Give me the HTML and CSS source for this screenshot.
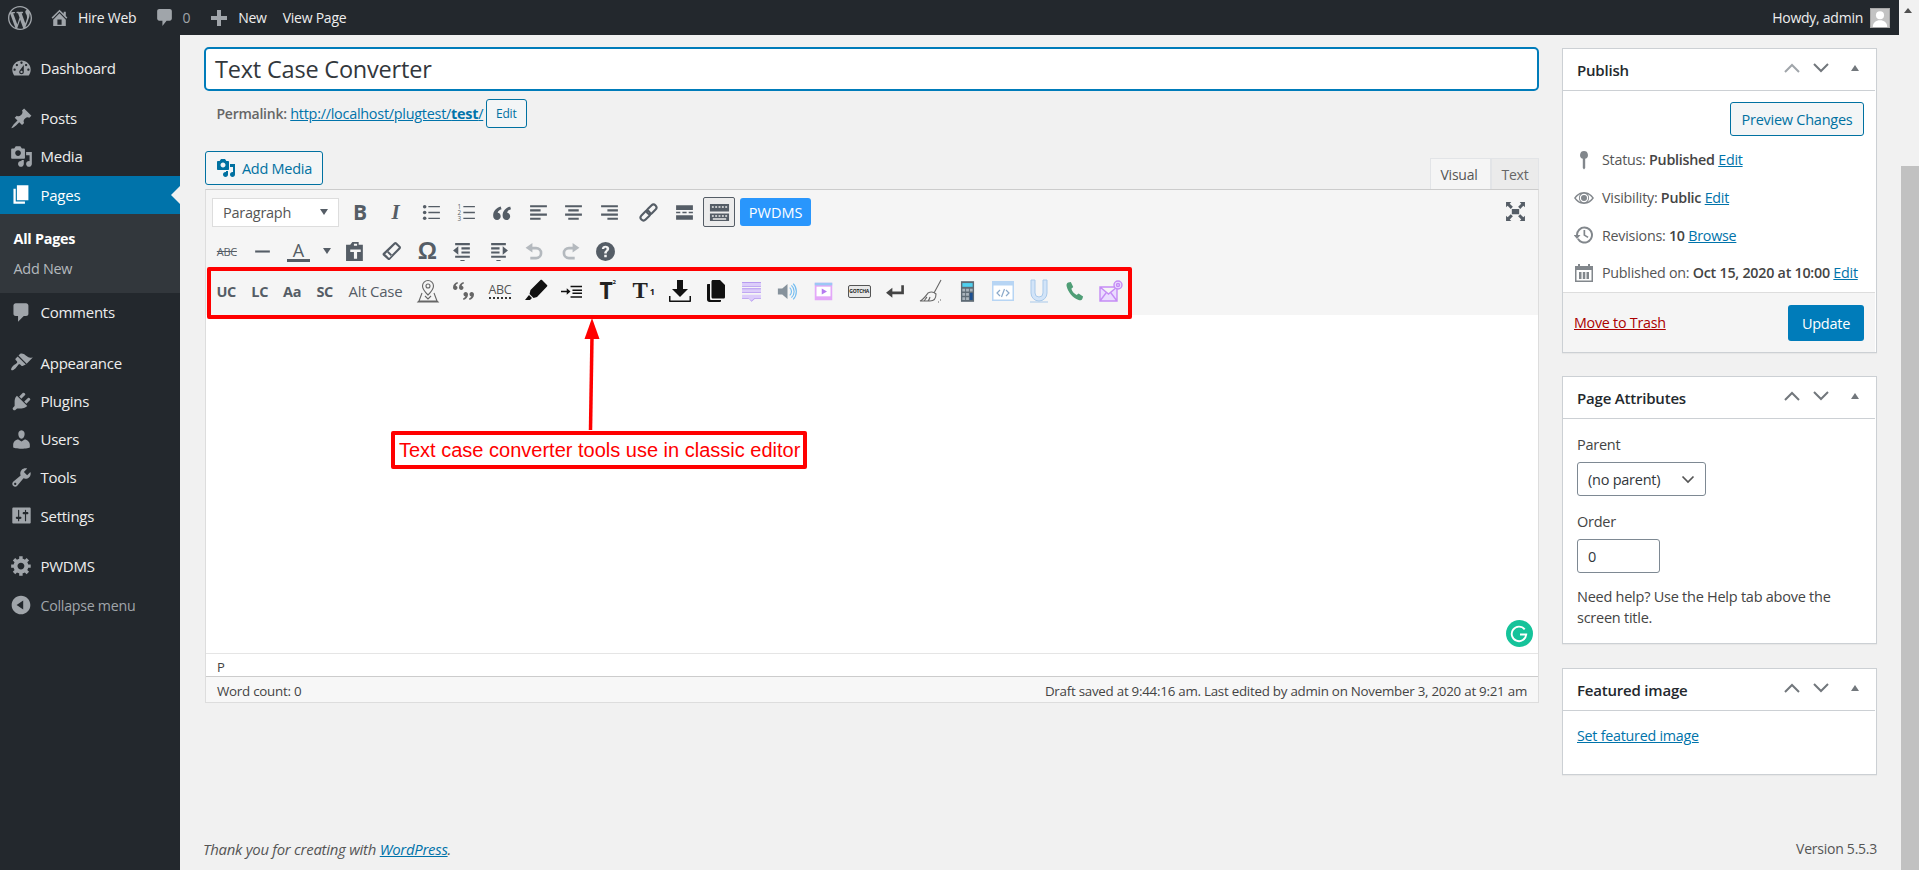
FILE: index.html
```html
<!DOCTYPE html>
<html lang="en">
<head>
<meta charset="utf-8">
<title>Edit Page</title>
<link rel="stylesheet" href="styles.css">
</head>
<body>
<div class="page">
<div class="viewport">
  <header class="adminbar">
    <svg class="ab-logo" viewBox="0 0 20 20"><path d="M20 10c0-5.51-4.49-10-10-10C4.48 0 0 4.49 0 10c0 5.52 4.48 10 10 10 5.51 0 10-4.48 10-10zM7.78 15.37L4.37 6.22c.55-.02 1.17-.08 1.17-.08.5-.06.44-1.13-.06-1.11 0 0-1.45.11-2.37.11-.18 0-.37 0-.58-.01C4.12 2.69 6.87 1.11 10 1.11c2.33 0 4.45.87 6.05 2.34-.68-.11-1.65.39-1.65 1.58 0 .74.45 1.36.9 2.1.35.61.55 1.36.55 2.46 0 1.49-1.4 5-1.4 5l-3.03-8.37c.54-.02.82-.17.82-.17.5-.05.44-1.25-.06-1.22 0 0-1.44.12-2.38.12-.87 0-2.33-.12-2.33-.12-.5-.03-.56 1.2-.06 1.22l.92.08 1.26 3.41zM17.41 10c.24-.64.74-1.87.43-4.25.7 1.29 1.05 2.71 1.05 4.25 0 3.29-1.73 6.24-4.4 7.78.97-2.59 1.94-5.2 2.92-7.78zM6.1 18.09C3.12 16.65 1.11 13.53 1.11 10c0-1.3.23-2.48.72-3.59C3.25 10.3 4.67 14.2 6.1 18.09zm4.03-6.63l2.58 6.98c-.86.29-1.76.45-2.71.45-.79 0-1.57-.11-2.29-.33.81-2.38 1.62-4.74 2.42-7.1z"/></svg>
    <svg class="ab-icon ab-home" viewBox="0 0 20 20"><path d="M16 8.5l1.53 1.53-1.06 1.06L10 4.62l-6.47 6.47-1.06-1.06L10 2.5l4 4v-2h2v4zm-6-2.46l6 5.99V18H4v-5.97zM12 17v-5H8v5h4z"/></svg>
    <span class="ab-text ab-site">Hire Web</span>
    <svg class="ab-icon ab-comment" viewBox="0 0 20 20"><path d="M5 2h10c1.100 0 2 .9 2 2v7c0 1.100-.9 2-2 2h-3l-4 5v-5H5c-1.100 0-2-.9-2-2V4c0-1.100.9-2 2-2z"/></svg>
    <span class="ab-count">0</span>
    <svg class="ab-icon ab-plus" viewBox="0 0 20 20"><path d="M8 2h4v6h6v4h-6v6H8v-6H2V8h6z"/></svg>
    <span class="ab-text ab-new">New</span>
    <span class="ab-text ab-view">View Page</span>
    <span class="ab-text ab-howdy">Howdy, admin</span>
    <span class="ab-avatar"><svg viewBox="0 0 20 20"><circle cx="10" cy="7" r="4.500"/><path d="M2 20c0-5 3.500-7.500 8-7.500s8 2.500 8 7.500z"/></svg></span>
  </header>

  <div class="workspace">
    <nav class="sidebar">
      <ul class="menu">
        <li class="item first"><svg class="mi" viewBox="0 0 20 20"><path fill-rule="evenodd" d="M3.760 16h12.480c1.100-1.370 1.760-3.110 1.760-5 0-4.420-3.580-8-8-8s-8 3.580-8 8c0 1.890.660 3.630 1.760 5zM10 4c.55 0 1 .45 1 1s-.45 1-1 1-1-.45-1-1 .45-1 1-1zM6 6c.55 0 1 .45 1 1s-.45 1-1 1-1-.45-1-1 .45-1 1-1zm8 0c.55 0 1 .45 1 1s-.45 1-1 1-1-.45-1-1 .45-1 1-1zm-5.370 5.550L12 7v6c0 1.100-.9 2-2 2s-2-.9-2-2c0-.57.24-1.080.63-1.450zM4 10c.55 0 1 .45 1 1s-.45 1-1 1-1-.45-1-1 .45-1 1-1zm12 0c.55 0 1 .45 1 1s-.45 1-1 1-1-.45-1-1 .45-1 1-1zm-5 3c0-.55-.45-1-1-1s-1 .45-1 1 .45 1 1 1 1-.45 1-1z"/></svg>Dashboard</li>
        <li class="item sep"><svg class="mi" viewBox="0 0 20 20"><path d="M10.440 3.020l1.820-1.820 6.360 6.350-1.830 1.820c-1.050-.68-2.480-.57-3.410.36l-.75.75c-.92.93-1.040 2.350-.35 3.410l-1.830 1.820-2.410-2.410-2.800 2.790c-.42.42-3.380 2.710-3.800 2.290s1.860-3.390 2.280-3.810l2.790-2.790L4.100 9.360l1.830-1.820c1.050.69 2.480.57 3.400-.36l.75-.75c.93-.92 1.050-2.350.36-3.410z"/></svg>Posts</li>
        <li class="item"><svg class="mi" viewBox="0 0 20 20"><path fill-rule="evenodd" d="M13 11V4c0-.55-.45-1-1-1h-1.670L9 1H5L3.670 3H2c-.55 0-1 .45-1 1v7c0 .55.45 1 1 1h10c.55 0 1-.45 1-1zM7 4.500c1.380 0 2.500 1.120 2.500 2.500S8.380 9.500 7 9.500 4.500 8.380 4.500 7 5.620 4.500 7 4.500zM14 6h5v10.500c0 1.380-1.120 2.500-2.500 2.500S14 17.880 14 16.500s1.120-2.500 2.500-2.500c.17 0 .34.02.5.05V9h-3V6zm-4 8.050V13h2v3.500c0 1.380-1.120 2.500-2.500 2.500S7 17.880 7 16.500 8.120 14 9.500 14c.17 0 .34.02.5.05z"/></svg>Media</li>
        <li class="item active"><svg class="mi" viewBox="0 0 20 20"><path d="M6 15V2h10v13H6zm-1 1h8v2H3V5h2v11z"/></svg>Pages</li>
        <li class="submenu">
          <span class="sub current">All Pages</span>
          <span class="sub">Add New</span>
        </li>
        <li class="item"><svg class="mi" viewBox="0 0 20 20"><path d="M5 2h9c1.100 0 2 .9 2 2v7c0 1.100-.9 2-2 2h-2l-5 5v-5H5c-1.100 0-2-.9-2-2V4c0-1.100.9-2 2-2z"/></svg>Comments</li>
        <li class="item sep sep-wide"><svg class="mi" viewBox="0 0 20 20"><path d="M14.480 11.060L7.410 3.990l1.500-1.500c.5-.56 2.300-.47 3.510.32 1.210.8 1.430 1.280 2.910 2.100 1.180.64 2.450 1.260 4.450.85zm-.71.71L6.700 4.700 4.930 6.470c-.39.39-.39 1.020 0 1.410l1.060 1.060c.39.39.39 1.030 0 1.420-.6.6-1.430 1.110-2.210 1.690-.35.26-.7.53-1.010.84-1.430 1.430-2.220 3.100-1.600 3.720.62.62 2.290-.17 3.720-1.600.31-.31.58-.66.84-1.010.58-.78 1.090-1.610 1.690-2.210.39-.39 1.030-.39 1.420 0l1.060 1.060c.39.39 1.020.39 1.410 0z"/></svg>Appearance</li>
        <li class="item"><svg class="mi" viewBox="0 0 20 20"><path d="M13.110 4.360L9.870 7.600 8 5.730l3.240-3.240c.35-.34 1.050-.2 1.560.32.52.51.66 1.210.31 1.550zm-8 1.770l.91-1.120 9.010 9.010-1.190.84c-.71.71-2.630 1.160-3.820 1.160H6.140L4.900 17.260c-.59.59-1.540.59-2.120 0-.59-.58-.59-1.530 0-2.120l1.240-1.240v-3.880c0-1.130.4-3.190 1.090-3.890zm7.260 3.970l3.240-3.240c.34-.35 1.040-.21 1.550.31.52.51.66 1.210.31 1.550l-3.240 3.250z"/></svg>Plugins</li>
        <li class="item"><svg class="mi" viewBox="0 0 20 20"><path d="M10 9.250c-2.270 0-2.730-3.440-2.730-3.440C7 4.020 7.820 2 9.970 2c2.160 0 2.980 2.020 2.710 3.810 0 0-.41 3.440-2.680 3.440zm0 2.570L12.720 10c2.390 0 4.520 2.330 4.520 4.530v2.490s-3.650 1.130-7.240 1.130c-3.650 0-7.240-1.130-7.240-1.130v-2.490c0-2.250 1.940-4.480 4.470-4.480z"/></svg>Users</li>
        <li class="item"><svg class="mi" viewBox="0 0 20 20"><path fill-rule="evenodd" d="M16.680 9.770c-1.340 1.340-3.300 1.670-4.950.99l-5.410 6.520c-.99.99-2.590.99-3.580 0s-.99-2.590 0-3.570l6.520-5.420c-.68-1.650-.35-3.610.99-4.950 1.280-1.280 3.120-1.620 4.720-1.060l-2.890 2.890 2.820 2.820 2.860-2.870c.53 1.580.18 3.390-1.080 4.650zM3.810 16.210c.4.39 1.040.39 1.430 0 .4-.4.4-1.040 0-1.430-.39-.4-1.030-.4-1.430 0-.39.39-.39 1.030 0 1.430z"/></svg>Tools</li>
        <li class="item"><svg class="mi" viewBox="0 0 20 20"><path fill-rule="evenodd" d="M18 16V4c0-.55-.45-1-1-1H3c-.55 0-1 .45-1 1v12c0 .55.45 1 1 1h14c.55 0 1-.45 1-1zM8 11h1c.55 0 1 .45 1 1s-.45 1-1 1H8v1.500c0 .28-.22.5-.5.5s-.5-.22-.5-.5V13H6c-.55 0-1-.45-1-1s.45-1 1-1h1V5.500c0-.28.22-.5.5-.5s.5.22.5.5V11zm5-2h-1c-.55 0-1-.45-1-1s.45-1 1-1h1V5.500c0-.28.22-.5.5-.5s.5.22.5.5V7h1c.55 0 1 .45 1 1s-.45 1-1 1h-1v5.500c0 .28-.22.5-.5.5s-.5-.22-.5-.5V9z"/></svg>Settings</li>
        <li class="item sep"><svg class="mi" viewBox="0 0 20 20"><path fill-rule="evenodd" d="M18 12h-2.180c-.17.7-.44 1.350-.81 1.930l1.540 1.540-2.100 2.100-1.540-1.540c-.58.36-1.230.63-1.910.79V19H8v-2.180c-.68-.16-1.330-.43-1.910-.79l-1.540 1.540-2.120-2.120 1.540-1.540c-.36-.58-.63-1.230-.79-1.910H1V9.030h2.170c.16-.7.44-1.350.8-1.940L2.430 5.550l2.100-2.100 1.540 1.540c.58-.37 1.240-.64 1.930-.81V2h3v2.180c.68.16 1.330.43 1.910.79l1.540-1.540 2.120 2.120-1.540 1.540c.36.59.64 1.240.8 1.940H18V12zm-8.500 1.500c1.660 0 3-1.340 3-3s-1.340-3-3-3-3 1.340-3 3 1.340 3 3 3z"/></svg>PWDMS</li>
        <li class="item collapse"><svg class="mi" viewBox="0 0 20 20"><path fill-rule="evenodd" d="M10 1.500c4.700 0 8.500 3.800 8.500 8.500s-3.800 8.500-8.500 8.500-8.500-3.800-8.500-8.500 3.800-8.500 8.500-8.500zM12 6l-6 4 6 4z"/></svg>Collapse menu</li>
      </ul>
    </nav>

    <main class="content">
      <div class="columns">
        <section class="primary">
          <div class="title-input">Text Case Converter</div>
          <div class="permalink">
            <b class="perm-label">Permalink:</b>
            <a class="link perm-url">http://localhost/plugtest/<b>test</b>/</a>
            <span class="btn perm-edit">Edit</span>
          </div>
          <div class="media-row">
            <span class="btn add-media"><svg class="am-icon" viewBox="0 0 20 20"><path fill-rule="evenodd" d="M13 11V4c0-.55-.45-1-1-1h-1.670L9 1H5L3.670 3H2c-.55 0-1 .45-1 1v7c0 .55.45 1 1 1h10c.55 0 1-.45 1-1zM7 4.500c1.380 0 2.500 1.120 2.500 2.500S8.380 9.500 7 9.500 4.500 8.380 4.500 7 5.620 4.500 7 4.500zM14 6h5v10.500c0 1.380-1.120 2.500-2.500 2.500S14 17.880 14 16.500s1.120-2.500 2.500-2.500c.17 0 .34.02.5.05V9h-3V6zm-4 8.050V13h2v3.500c0 1.380-1.120 2.500-2.500 2.500S7 17.880 7 16.500 8.120 14 9.500 14c.17 0 .34.02.5.05z"/></svg>Add Media</span>
            <div class="tabs"><span class="tab on">Visual</span><span class="tab">Text</span></div>
          </div>

          <div class="editor">
            <div class="toolbar">
              <div class="row row1">
                <span class="format">Paragraph<i class="caret"></i></span>
                <span class="tb tb-after"><b class="g-b">B</b></span>
                <span class="tb"><i class="g-i">I</i></span>
                <span class="tb"><svg class="ti" viewBox="0 0 20 20"><circle cx="3.500" cy="4.500" r="1.700"/><circle cx="3.500" cy="10" r="1.700"/><circle cx="3.500" cy="15.500" r="1.700"/><path d="M7 3.800h11v1.300H7zM7 9.400h11v1.300H7zM7 14.900h11v1.300H7z"/></svg></span>
                <span class="tb"><svg class="ti" viewBox="0 0 20 20"><text class="ti-num" x="1.500" y="6.500">1</text><text class="ti-num" x="1.500" y="12.500">2</text><text class="ti-num" x="1.500" y="18.500">3</text><path d="M7 3.800h11v1.300H7zM7 9.400h11v1.300H7zM7 14.900h11v1.300H7z"/></svg></span>
                <span class="tb"><svg class="ti" viewBox="0 0 20 20"><path transform="translate(-0.500 -0.500) scale(1.600)" d="M5.500 3C3 3.800 1 5.500 1 8.500c0 1.500 1 2.500 2.300 2.500s2.200-1 2.200-2.200c0-1.200-.8-2-1.800-2.100C3.900 5.700 4.700 5 6 4.600z"/><path transform="translate(8.500 -0.500) scale(1.600)" d="M5.500 3C3 3.800 1 5.500 1 8.500c0 1.500 1 2.500 2.300 2.500s2.200-1 2.200-2.200c0-1.200-.8-2-1.800-2.100C3.900 5.700 4.700 5 6 4.600z"/></svg></span>
                <span class="tb"><svg class="ti" viewBox="0 0 20 20"><path d="M2 3h16v2H2zM2 7h10v2H2zM2 11h16v2H2zM2 15h10v2H2z"/></svg></span>
                <span class="tb"><svg class="ti" viewBox="0 0 20 20"><path d="M2 3h16v2H2zM5 7h10v2H5zM2 11h16v2H2zM5 15h10v2H5z"/></svg></span>
                <span class="tb"><svg class="ti" viewBox="0 0 20 20"><path d="M2 3h16v2H2zM8 7h10v2H8zM2 11h16v2H2zM8 15h10v2H8z"/></svg></span>
                <span class="tb tb-link"><svg class="ti ti-stroke" viewBox="0 0 20 20"><g transform="rotate(-45 10 10)"><rect x="0.500" y="7.200" width="10.500" height="5.600" rx="2.800"/><rect x="9" y="7.200" width="10.500" height="5.600" rx="2.800"/></g></svg></span>
                <span class="tb"><svg class="ti" viewBox="0 0 20 20"><path d="M2 3h16v4.500H2zM2 9.300h4v1.400H2zM8 9.300h4v1.400H8zM14 9.300h4v1.400h-4zM2 12.500h16V17H2z"/></svg></span>
                <span class="kbd"><svg class="ti" viewBox="0 0 22 22"><path fill-rule="evenodd" d="M1 2h20v8H1zM3 4.500v1.500h2V4.500zm3.500 0v1.500h2V4.500zm3.500 0v1.500h2V4.500zm3.500 0v1.500h2V4.500zm3.500 0v1.500h2V4.500zM1 12h20v8H1zM3 14v1.500h2V14zm3.500 0v1.500h2V14zm3.500 0v1.500h2V14zm3.500 0v1.500h2V14zm3.500 0v1.500h2V14zM4 17v1.500h14V17z"/></svg></span>
                <span class="pwdms">PWDMS</span>
                <span class="tb tb-full"><svg class="ti" viewBox="0 0 20 20"><path d="M6.500 7.500h7v5h-7zM1 1h5L4.500 2.500 7.500 5.500 5.500 7.500 2.500 4.500 1 6zM19 1v5l-1.500-1.500-3 3-2-2 3-3L14 1zM1 19v-5l1.500 1.500 3-3 2 2-3 3L6 19zM19 19h-5l1.500-1.500-3-3 2-2 3 3L19 14z"/></svg></span>
              </div>
              <div class="row row2">
                <span class="tb"><span class="g-abc">ABC</span></span>
                <span class="tb"><svg class="ti" viewBox="0 0 20 20"><path d="M3 9h14v2H3z"/></svg></span>
                <span class="tb g-color">A<i class="color-bar"></i></span>
                <span class="tb tb-caret"><i class="caret"></i></span>
                <span class="tb"><svg class="ti" viewBox="0 0 20 20"><path fill-rule="evenodd" d="M7 1h6v2.500h4V19H1V3.500h4zM8.500 2.500v2h3v-2zM5 8v2.500h3.500V17h3v-6.500H15V8z"/></svg></span>
                <span class="tb"><svg class="ti" viewBox="0 0 20 20"><path fill-rule="evenodd" d="M12.500 1.500c.7-.7 1.700-.7 2.400 0l3.600 3.600c.7.7.7 1.700 0 2.400l-9.800 10c-.7.700-1.700.700-2.400 0L2 13.800c-.7-.7-.7-1.700 0-2.400zM4 12.500l3.700 3.700 3-3-3.700-3.700zM13.700 3l-7.900 7.900 3.300 3.300L17 6.300z"/></svg></span>
                <span class="tb g-omega">Ω</span>
                <span class="tb"><svg class="ti" viewBox="0 0 20 20"><path d="M3 2h14v2H3zM9 6h8v2H9zM9 10h8v2H9zM3 14h14v2H3zM8 18h4v1H8zM1 9l5-4v8z"/></svg></span>
                <span class="tb"><svg class="ti" viewBox="0 0 20 20"><path d="M3 2h14v2H3zM3 6h8v2H3zM3 10h8v2H3zM3 14h14v2H3zM8 18h4v1H8zM19 9l-5-4v8z"/></svg></span>
                <span class="tb"><svg class="ti ti-off" viewBox="0 0 20 20"><path d="M8 2v3.500h3.500a6 6 0 0 1 0 12H6v-2.500h5.500a3.500 3.500 0 0 0 0-7H8V11L1.500 6.500z"/></svg></span>
                <span class="tb"><svg class="ti ti-off" viewBox="0 0 20 20"><path d="M12 2v3.500H8.500a6 6 0 0 0 0 12H14v-2.500H8.500a3.500 3.500 0 0 1 0-7H12V11l6.500-4.500z"/></svg></span>
                <span class="tb"><svg class="ti" viewBox="0 0 20 20"><path fill-rule="evenodd" d="M10 1a9 9 0 1 1 0 18 9 9 0 0 1 0-18zM8.800 13v2.400h2.400V13zM10 4.500c-2 0-3.400 1.100-3.500 3.200h2.300c.1-.8.500-1.200 1.100-1.200.6 0 1.100.4 1.100 1 0 1.400-2.200 1.500-2.200 4.300h2.400c0-1.900 2.300-2.100 2.300-4.600 0-1.700-1.500-2.700-3.500-2.700z"/></svg></span>
              </div>
              <div class="row row3">
                <span class="tc uc">UC</span>
                <span class="tc lc">LC</span>
                <span class="tc aa">Aa</span>
                <span class="tc sc">SC</span>
                <span class="tc alt">Alt Case</span>
                <span class="tw"><svg class="ti ti-big ti-line" viewBox="0 0 24 24"><path d="M12 1.500a5.500 5.500 0 0 1 5.500 5.500c0 3-3.500 7-5.500 9-2-2-5.500-6-5.500-9A5.500 5.500 0 0 1 12 1.500z"/><circle cx="12" cy="7" r="2"/><path d="M6 14l-3 8h18l-3-8M3 22l-1 1h20l-1-1M9 17l3 3 3-3"/></svg></span>
                <span class="tw"><svg class="ti ti-big ti-gray" viewBox="0 0 24 24"><path d="M5.500 3C3 3.800 1 5.500 1 8.500c0 1.500 1 2.500 2.300 2.500s2.200-1 2.200-2.200c0-1.200-.8-2-1.800-2.100C3.900 5.700 4.700 5 6 4.600z"/><path transform="translate(6 0)" d="M5.500 3C3 3.800 1 5.500 1 8.500c0 1.500 1 2.500 2.300 2.500s2.200-1 2.200-2.200c0-1.200-.8-2-1.800-2.100C3.900 5.700 4.700 5 6 4.600z"/><path transform="rotate(180 8.500 12)" d="M5.500 3C3 3.800 1 5.500 1 8.500c0 1.500 1 2.500 2.300 2.500s2.200-1 2.200-2.200c0-1.200-.8-2-1.800-2.100C3.900 5.700 4.700 5 6 4.600z"/><path transform="rotate(180 11.500 12)" d="M5.500 3C3 3.800 1 5.500 1 8.500c0 1.500 1 2.500 2.300 2.500s2.200-1 2.200-2.200c0-1.200-.8-2-1.800-2.100C3.900 5.700 4.700 5 6 4.600z"/></svg></span>
                <span class="tw"><span class="g-abc2">ABC</span></span>
                <span class="tw"><svg class="ti ti-big ti-black" viewBox="0 0 24 24"><path d="M18 1l5 5c.5.5.5 1 0 1.500L13 18l-3.500 1-4-4 1-4L16.500 1c.5-.5 1-.5 1.500 0zM5 16l3 3-2 2H1z"/></svg></span>
                <span class="tw"><svg class="ti ti-black" viewBox="0 0 22 20"><path d="M10 4h12v1.500H10zM12 8h10v1.500H12zM12 11h10v1.500H12zM10 15h12v1.500H10zM0 9.200h6V6.500l4 3.500-4 3.500v-2.700H0z"/></svg></span>
                <span class="tw g-sup">T<sup>2</sup></span>
                <span class="tw g-sub">T<sub>1</sub></span>
                <span class="tw"><svg class="ti ti-big ti-black" viewBox="0 0 24 24"><path d="M9 1h6v9h5l-8 8-8-8h5zM1 17h1.500v4.500h19V17H23v5c0 .6-.4 1-1 1H2c-.6 0-1-.4-1-1z"/></svg></span>
                <span class="tw"><svg class="ti ti-big ti-black" viewBox="0 0 24 24"><path d="M10 1h7l5 5v12c0 1-.7 1.500-1.500 1.500H10c-1 0-1.500-.7-1.500-1.500V2.500C8.500 1.700 9 1 10 1zM5 5h2v14.500c0 1 .6 1.500 1.500 1.500H18v1c0 .7-.6 1-1.200 1H6.500C5 23 4 22 4 20.500V6c0-.6.4-1 1-1z"/></svg></span>
                <span class="tw"><svg class="ti" viewBox="0 0 20 20"><path class="c-lilac" d="M1 1h18v4.500H1zM1 7h18v4.500H1zM1 13h18v4h-6l-3 2.500L7 17H1z"/><path class="c-lilac-d" d="M1 1h18v.8H1zM1 4.700h18v.8H1zM1 7h18v.8H1zM1 10.700h18v.8H1zM1 16.200h6l3 2.600 3-2.600h6v.8h-5.700L10 19.800 7.700 17H1z"/></svg></span>
                <span class="tw"><svg class="ti" viewBox="0 0 24 24"><path class="c-slate" d="M1 8.500h5l6-5v17l-6-5H1z"/><path class="c-arc" d="M14.500 7.500a6 6 0 0 1 0 9M16.500 5a9.500 9.500 0 0 1 0 14M18.500 3a13 13 0 0 1 0 18"/></svg></span>
                <span class="tw"><svg class="ti" viewBox="0 0 24 24"><path class="c-pink" d="M2 2h20v20H2z"/><path class="c-inner" d="M4 6.500h16v11H4z"/><path class="c-violet" d="M10 8.500l6 3.500-6 3.500z"/><path class="c-blue" d="M2 2h20v3H2z"/></svg></span>
                <span class="tw"><span class="gotcha">GOTCHA</span></span>
                <span class="tw"><svg class="ti ti-dark" viewBox="0 0 20 20"><path d="M18 4v8.500H7V16L1 11.300 7 6.500V10h8.500V4z"/></svg></span>
                <span class="tw"><svg class="ti ti-big ti-line" viewBox="0 0 24 24"><path d="M22 1l-7 13M9 14c3-1.500 6-1 8 1 0 4-2 7-6 7H1c3-1 5-4 8-8zM5 22c1-1 2-3 3-4M9 22c1-1 1.500-2 2-4M21 21h1M19 23h1"/></svg></span>
                <span class="tw"><svg class="ti ti-calc" viewBox="0 0 16 22"><path class="c-calc" d="M1 0h14v22H1z"/><path class="c-cyan" d="M2.500 2h11v4h-11z"/><path class="c-key" d="M2.500 8h3v3h-3zM6.500 8h3v3h-3zM10.500 8h3v3h-3zM2.500 12.500h3v3h-3zM6.500 12.500h3v3h-3zM2.500 17h3v3h-3zM6.500 17h3v3h-3z"/><path class="c-navy" d="M10.500 12.500h3V20h-3z"/></svg></span>
                <span class="tw"><svg class="ti ti-big" viewBox="0 0 24 24"><path class="c-win" d="M1 2h22v20H1z"/><path class="c-inner" d="M2.500 6.500h19v14h-19z"/><path class="c-code" d="M9 11l-3 3 3 3M15 11l3 3-3 3M13.500 10l-3 8"/></svg></span>
                <span class="tw"><svg class="ti ti-big" viewBox="0 0 24 24"><path class="c-u" d="M4 1h4v13a4 4 0 0 0 8 0V1h4v13a8 8 0 0 1-16 0zM3 23h18"/></svg></span>
                <span class="tw"><svg class="ti ti-phone" viewBox="0 0 20 20"><path d="M4 1.500l2.500-.5 2.300 4.800-1.800 1.600c.8 2.600 2.600 4.700 5 6l1.900-1.600 4.300 2.900-.7 2.300c-.5 1.300-2.100 1.800-3.600 1.200C8 15.700 3.900 10.700 2.500 5c-.4-1.500.2-3 1.500-3.500z"/></svg></span>
                <span class="tw"><svg class="ti ti-big" viewBox="0 0 24 24"><path class="c-mail" d="M1 8h17v14H1zM1 8l8.500 7L18 8M1 22l6-8M18 22l-6-8"/><circle class="c-mail" cx="19" cy="6" r="4"/><circle class="c-mail" cx="19" cy="6" r="1.500"/></svg></span>
              </div>
            </div>
            <div class="edit-body">
              <span class="grammarly"><svg viewBox="0 0 26 26"><path class="g-arc" d="M18 9a7 7 0 1 0 1.500 5h-6"/></svg></span>
            </div>
            <div class="path-row">P</div>
            <div class="count-row"><span>Word count: 0</span><span>Draft saved at 9:44:16 am. Last edited by admin on November 3, 2020 at 9:21 am</span></div>
          </div>

          <div class="annotation">
            <div class="red-box"></div>
            <svg class="red-arrow" viewBox="0 0 24 112"><path class="arrow-shaft" d="M10.500 112L12 18"/><path class="arrow-head" d="M12 0l7.500 21h-15z"/></svg>
            <div class="red-label">Text case converter tools use in classic editor</div>
          </div>
        </section>

        <aside class="secondary">
          <section class="box">
            <header class="box-head"><h2>Publish</h2>
              <svg class="ctl dim" viewBox="0 0 16 10"><path d="M1 9l7-7 7 7"/></svg>
              <svg class="ctl" viewBox="0 0 16 10"><path d="M1 1l7 7 7-7"/></svg>
              <i class="tri"></i>
            </header>
            <div class="pub-actions"><span class="btn preview">Preview Changes</span></div>
            <div class="pub-row"><svg class="pi" viewBox="0 0 20 20"><path fill-rule="evenodd" d="M10 1a4 4 0 0 1 1.200 7.800V18l-1.200 1.500L8.800 18V8.800A4 4 0 0 1 10 1z"/></svg><span>Status: <b>Published</b> <a class="link">Edit</a></span></div>
            <div class="pub-row"><svg class="pi" viewBox="0 0 20 20"><path fill-rule="evenodd" d="M10 4c4.500 0 8 3 10 6-2 3-5.500 6-10 6S2 13 0 10c2-3 5.500-6 10-6zm0 1.800a4.200 4.200 0 1 0 0 8.400 4.200 4.200 0 0 0 0-8.400zM1.800 10c1.300 1.700 3 3 4.700 3.900A5.500 5.500 0 0 1 6.500 6.100 13 13 0 0 0 1.800 10zm11.700-3.900a5.500 5.500 0 0 1 0 7.800 13 13 0 0 0 4.700-3.900 13 13 0 0 0-4.700-3.900zM10 7a3 3 0 1 1 0 6 3 3 0 0 1 0-6z"/></svg><span>Visibility: <b>Public</b> <a class="link">Edit</a></span></div>
            <div class="pub-row"><svg class="pi" viewBox="0 0 20 20"><path fill-rule="evenodd" d="M10.500 1.500a8.500 8.500 0 1 1-7.400 12.700l1.700-1A6.500 6.500 0 1 0 4 10h2.500L3 14-.5 10H2a8.500 8.500 0 0 1 8.500-8.500zM9.500 5h1.700v4.700l3.300 2-.9 1.400-4.100-2.500z"/></svg><span>Revisions: <b>10</b> <a class="link">Browse</a></span></div>
            <div class="pub-row"><svg class="pi" viewBox="0 0 20 20"><path fill-rule="evenodd" d="M4 1h2v2h8V1h2v2h3v16H1V3h3zM2.500 7v10.500h15V7zM5 9h2.500v7H5zM8.800 9h2.500v7H8.800zM12.500 9H15v7h-2.500z"/></svg><span>Published on: <b>Oct 15, 2020 at 10:00</b> <a class="link">Edit</a></span></div>
            <footer class="pub-foot"><a class="trash">Move to Trash</a><span class="update">Update</span></footer>
          </section>

          <section class="box attrs">
            <header class="box-head"><h2>Page Attributes</h2>
              <svg class="ctl" viewBox="0 0 16 10"><path d="M1 9l7-7 7 7"/></svg>
              <svg class="ctl" viewBox="0 0 16 10"><path d="M1 1l7 7 7-7"/></svg>
              <i class="tri"></i>
            </header>
            <div class="attrs-body">
              <p class="field-label">Parent</p>
              <div class="select">(no parent)<svg viewBox="0 0 14 9"><path d="M1.500 1.500L7 7l5.500-5.500"/></svg></div>
              <p class="field-label order-label">Order</p>
              <div class="number">0</div>
              <p class="help">Need help? Use the Help tab above the screen title.</p>
            </div>
          </section>

          <section class="box featured">
            <header class="box-head"><h2>Featured image</h2>
              <svg class="ctl" viewBox="0 0 16 10"><path d="M1 9l7-7 7 7"/></svg>
              <svg class="ctl" viewBox="0 0 16 10"><path d="M1 1l7 7 7-7"/></svg>
              <i class="tri"></i>
            </header>
            <div class="featured-body"><a class="link">Set featured image</a></div>
          </section>
        </aside>
      </div>
      <footer class="pagefoot"><em class="thanks">Thank you for creating with <a class="link">WordPress</a>.</em><span>Version 5.5.3</span></footer>
    </main>
  </div>
</div>
<div class="scrollbar"><i class="sb-up"></i><div class="sb-thumb"></div></div>
</div>
</body>
</html>
```

FILE: styles.css
```css
* { box-sizing: border-box; }
html, body { margin: 0; height: 870px; overflow: hidden; }
body { font-family: "Open Sans", "Noto Sans", sans-serif; font-size: 13.5px; letter-spacing: -0.25px; color: #444; background: #f1f1f1; }
ul { list-style: none; margin: 0; padding: 0; }
p, h2 { margin: 0; }
a { text-decoration: underline; }
.link { color: #0073aa; }

.page { display: flex; height: 870px; }
.viewport { flex: 1; min-width: 0; display: flex; flex-direction: column; }

.adminbar { height: 35px; flex: none; background: #23282d; color: #eee; display: flex; align-items: center; }
.ab-logo { width: 24px; height: 24px; margin-left: 8px; fill: #a0a5aa; }
.ab-icon { fill: #a0a5aa; flex: none; }
.ab-home { width: 21px; height: 21px; margin-left: 17px; }
.ab-text { color: #eee; font-size: 14px; }
.ab-site { margin-left: 8px; }
.ab-comment { width: 21px; height: 21px; margin-left: 18px; }
.ab-count { margin-left: 7px; color: #a0a5aa; font-size: 14px; }
.ab-plus { width: 20px; height: 20px; margin-left: 19px; }
.ab-new { margin-left: 9px; }
.ab-view { margin-left: 16px; }
.ab-howdy { margin-left: auto; }
.ab-avatar { width: 20px; height: 20px; margin: 0 9px 0 7px; background: #c3c3c3; display: block; border: 1px solid #a8a8a8; }
.ab-avatar svg { display: block; width: 18px; height: 18px; fill: #fff; }

.workspace { flex: 1; min-height: 0; display: flex; }
.sidebar { width: 180px; flex: none; background: #23282d; padding-top: 14px; }
.item { height: 38.2px; display: flex; align-items: center; color: #eee; font-size: 15px; padding-left: 9.500px; }
.mi { width: 23px; height: 23px; fill: #a0a5aa; margin-right: 8px; flex: none; }
.sep { margin-top: 12px; }
.sep-wide { margin-top: 12.500px; }
.active { background: #0073aa; color: #fff; position: relative; }
.active .mi { fill: #fff; }
.active::after { content: ""; position: absolute; right: 0; top: 50%; margin-top: -9px; border: 9px solid transparent; border-left-width: 0; border-right-color: #f1f1f1; }
.submenu { background: #32373c; height: 79.400px; padding-top: 9px; display: flex; flex-direction: column; }
.sub { height: 30.500px; display: flex; align-items: center; padding-left: 13.500px; color: #b4b9be; font-size: 14.400px; }
.current { color: #fff; font-weight: 700; }
.collapse { color: #a0a5aa; margin-top: 1px; font-size: 14.200px; }
.collapse .mi { width: 22px; height: 22px; margin-left: 0; margin-right: 9px; }

.content { flex: 1; min-width: 0; display: flex; flex-direction: column; padding: 12px 22px 0 24px; }
.columns { display: flex; justify-content: space-between; flex: 1; min-height: 0; }
.primary { width: 1335px; position: relative; }
.secondary { width: 315px; padding-top: 1px; margin-left: 22px; flex: none; }

.title-input { height: 44px; margin-left: 0; background: #fff; border: 2px solid #007cba; border-radius: 5px; color: #32373c; font-size: 23.500px; letter-spacing: -0.2px; line-height: 40px; padding-left: 9px; }
.permalink { height: 29px; margin-top: 8px; padding-left: 12.500px; display: flex; align-items: center; font-size: 14.400px; }
.perm-label { color: #666; font-weight: 600; margin-right: 3.500px; font-size: 14px; }
.perm-url b { font-weight: 700; }
.btn { display: inline-flex; align-items: center; justify-content: center; border: 1px solid #0071a1; border-radius: 3px; background: #f3f5f6; color: #0071a1; }
.perm-edit { width: 41px; height: 29px; margin-left: 2.500px; font-size: 12px; }
.media-row { height: 38px; margin-top: 23px; display: flex; justify-content: space-between; align-items: flex-start; }
.add-media { width: 118px; height: 34px; margin-left: 1px; font-size: 14.500px; }
.am-icon { width: 20px; height: 20px; fill: #0071a1; margin-right: 6px; }
.tabs { display: flex; align-self: flex-end; height: 31px; margin-top: 7px; }
.tab { width: 48px; height: 31px; border: 1px solid #e2e4e7; border-bottom: 0; background: #ebebeb; color: #666; font-size: 14px; display: flex; align-items: center; justify-content: center; }
.tab.on { width: 61px; background: #f5f5f5; color: #555; padding-right: 3px; }

.editor { margin-left: 1px; height: 514px; border: 1px solid #ddd; border-top-color: #ccc; background: #fff; display: flex; flex-direction: column; }
.toolbar { height: 125px; flex: none; background: #f5f5f5; padding-top: 7px; }
.row { height: 30px; display: flex; align-items: center; }
.row1 { padding-left: 6px; padding-right: 5px; }
.row2 { margin-top: 9px; padding-left: 3px; }
.row3 { margin-top: 10px; padding-left: 3px; }
.format { width: 127px; height: 29px; background: #fff; border: 1px solid #ddd; color: #555; font-size: 14.500px; display: flex; align-items: center; justify-content: space-between; padding: 0 10px; line-height: 25px; }
.caret { width: 0; height: 0; border: 4.500px solid transparent; border-bottom-width: 0; border-top: 6px solid #555d66; border-left-width: 4.500px; display: block; }
.tb { width: 35.700px; height: 30px; flex: none; display: flex; align-items: center; justify-content: center; color: #555d66; position: relative; }
.tb-after { margin-left: 3px; }
.tb-link { margin-left: 3px; }
.tb-full { margin-left: auto; margin-top: -2px; }
.tb-caret { width: 22px; }
.ti { width: 21px; height: 21px; fill: #555d66; display: block; }
.ti-stroke { fill: none; stroke: #555d66; stroke-width: 2; }
.ti-num { font: 6px "Open Sans", sans-serif; letter-spacing: 0; }
.ti-off { fill: #b4b9be; }
.ti-big { width: 24px; height: 24px; }
.ti-line { fill: none; stroke: #666; stroke-width: 1.100; }
.ti-black { fill: #111; }
.ti-gray { fill: #666; }
.ti-dark { fill: #444; }
.ti-phone { fill: #4f9e76; }
.ti-calc { width: 15px; height: 21px; }
.g-b { font: 700 21px "Open Sans", sans-serif; }
.g-i { font: italic 700 21px "Liberation Serif", serif; }
.g-abc { font-size: 11px; text-decoration: line-through; letter-spacing: -0.3px; }
.g-color { font-size: 18px; line-height: 1; flex-direction: column; }
.color-bar { display: block; width: 23px; height: 3px; background: #555d66; margin-top: 0; }
.g-omega { font: 700 24px "Liberation Sans", sans-serif; }
.kbd { width: 32px; height: 30px; margin-left: 1.300px; border: 1px solid #555d66; border-radius: 2px; background: #ececec; display: flex; align-items: center; justify-content: center; }
.pwdms { width: 71px; height: 28px; margin-left: 5px; background: #2996fc; border-radius: 3px; color: #fff; font-size: 14.500px; display: flex; align-items: center; justify-content: center; letter-spacing: 0; }
.tc { height: 30px; flex: none; display: flex; align-items: center; justify-content: center; color: #555d66; font-weight: 700; font-size: 14.500px; }
.uc { width: 34.500px; }
.lc, .aa, .sc { width: 32.500px; }
.alt { width: 69px; font-weight: 400; font-size: 15px; }
.tw { width: 35.950px; height: 30px; flex: none; display: flex; align-items: center; justify-content: center; }
.g-abc2 { display: block; font-size: 12.500px; line-height: 13px; color: #555; border-bottom: 2px dotted #333; padding-bottom: 1px; letter-spacing: -0.4px; }
.g-sup { font-size: 23px; font-weight: 700; color: #222; line-height: 1; align-items: flex-start; padding-top: 3px; }
.g-sup sup { font-size: 6px; line-height: 1; }
.g-sub { font: 700 23px "Liberation Serif", serif; color: #222; }
.g-sub sub { font: 700 9px "Open Sans", sans-serif; vertical-align: -5px; margin-left: 2px; line-height: 1; }
.gotcha { display: block; width: 23px; height: 13px; border: 1.500px solid #555; border-radius: 2px; background: #e8e8e8; color: #222; font-size: 5px; font-weight: 700; line-height: 10px; text-align: center; letter-spacing: -0.2px; }
.c-lilac { fill: #dccdfa; }
.c-lilac-d { fill: #b79cf0; }
.c-slate { fill: #86929c; }
.c-arc { fill: none; stroke: #74bdf0; stroke-width: 1.300; }
.c-pink { fill: #e3a8f8; }
.c-inner { fill: #fff; }
.c-violet { fill: #b57bf0; }
.c-blue { fill: #9cc8f4; }
.c-calc { fill: #5e6b75; }
.c-cyan { fill: #4fd0ef; }
.c-key { fill: #aab4bc; }
.c-navy { fill: #1b4f91; }
.c-win { fill: #b7d5f4; }
.c-code { fill: none; stroke: #8aa9c9; stroke-width: 1.200; }
.c-u { fill: #d2e4f8; stroke: #a9c9ea; stroke-width: 1; }
.c-mail { fill: #eadcff; stroke: #c58cf5; stroke-width: 1.400; }
.edit-body { flex: 1; min-height: 0; background: #fff; display: flex; align-items: flex-end; justify-content: flex-end; padding: 0 5px 6px 0; }
.grammarly { display: block; width: 27px; height: 27px; border-radius: 50%; background: #15c39a; }
.grammarly svg { display: block; width: 27px; height: 27px; }
.g-arc { fill: none; stroke: #fff; stroke-width: 1.800; }
.path-row { height: 23px; border-top: 1px solid #e5e5e5; padding-left: 11px; font-size: 13px; line-height: 26px; color: #444; }
.count-row { height: 26px; background: #f7f7f7; border-top: 1px solid #ccc; padding: 2px 11px 0; font-size: 13.350px; display: flex; justify-content: space-between; align-items: center; color: #444; }

.annotation { position: absolute; left: 0; top: 0; width: 0; height: 0; }
.red-box { position: absolute; left: 3px; top: 220px; width: 925px; height: 52px; border: 4px solid #f00; border-radius: 2px; }
.red-arrow { position: absolute; left: 376px; top: 271px; width: 24px; height: 112px; }
.arrow-shaft { fill: none; stroke: #f00; stroke-width: 3.500; }
.arrow-head { fill: #f00; }
.red-label { position: absolute; left: 187px; top: 383.500px; width: 416px; height: 38px; border: 4px solid #f00; border-radius: 2px; color: #f00; background: #fff; font: 20px/30px "Liberation Sans", sans-serif; letter-spacing: 0; padding-left: 4px; white-space: nowrap; }

.box { background: #fff; border: 1px solid #ccd0d4; box-shadow: 0 1px 1px rgba(0,0,0,.04); }
.box-head { height: 42px; border-bottom: 1px solid #ccd0d4; display: flex; align-items: center; padding: 0 16px 0 14px; margin-right: 1px; }
.box-head h2 { font-size: 15px; font-weight: 600; color: #23282d; margin-right: auto; letter-spacing: -0.2px; }
.ctl { width: 16px; height: 10px; margin-left: 13px; margin-top: -3px; fill: none; stroke: #72777c; stroke-width: 2; overflow: visible; }
.ctl.dim { stroke: #a0a5aa; }
.tri { display: block; width: 0; height: 0; margin-left: 22px; margin-top: -3px; border: 4.500px solid transparent; border-top-width: 0; border-bottom: 6px solid #72777c; }
.pub-actions { display: flex; justify-content: flex-end; padding: 11px 12px 5px 0; }
.preview { width: 134px; height: 34px; font-size: 14.500px; }
.pub-row { height: 37.700px; display: flex; align-items: center; padding-left: 11px; font-size: 14.300px; color: #555; }
.pub-row b { font-weight: 600; color: #444; }
.pi { width: 20px; height: 20px; fill: #82878c; margin-right: 8px; flex: none; }
.pub-foot { height: 60px; margin-top: 0.500px; margin-right: 1px; background: #f5f5f5; border-top: 1px solid #ddd; display: flex; justify-content: space-between; align-items: flex-start; padding: 12px 11px 0 11px; }
.trash { color: #a00; font-size: 14.300px; margin-top: 8px; }
.update { width: 76px; height: 36px; background: #007cba; border-radius: 3px; color: #fff; font-size: 14.500px; display: flex; align-items: center; justify-content: center; }
.attrs { height: 268px; margin-top: 23px; }
.attrs-body { padding: 16px 14px 0; font-size: 14.500px; color: #444; }
.field-label { line-height: 20px; height: 20px; font-weight: 400; }
.select { width: 129px; height: 34px; margin-top: 7px; border: 1px solid #7e8993; border-radius: 3px; padding-left: 10px; display: flex; align-items: center; justify-content: space-between; font-size: 14.500px; color: #32373c; }
.select svg { width: 14px; height: 9px; margin-right: 10px; fill: none; stroke: #555; stroke-width: 1.700; }
.order-label { margin-top: 16px; }
.number { width: 83px; height: 34px; margin-top: 7px; border: 1px solid #7e8993; border-radius: 3px; padding-left: 10px; display: flex; align-items: center; font-size: 14.500px; color: #32373c; }
.help { margin-top: 13px; line-height: 21px; font-size: 14.500px; color: #444; width: 285px; }
.featured { height: 107px; margin-top: 24px; }
.featured-body { padding: 15px 14px 0; font-size: 14.300px; line-height: 20px; }

.pagefoot { flex: none; height: 34px; padding-top: 3px; display: flex; justify-content: space-between; align-items: flex-start; font-size: 14px; color: #555; margin-left: -1px; }
.thanks { font-size: 14.900px; }

.scrollbar { width: 20px; flex: none; background: #f1f1f1; position: relative; padding: 0 0 0 2px; }
.sb-up { display: block; width: 0; height: 0; margin: 8px 0 0 3px; border: 4.500px solid transparent; border-top-width: 0; border-bottom: 5px solid #505050; }
.sb-thumb { height: 704px; margin-top: 153px; background: #c1c1c1; }
```
